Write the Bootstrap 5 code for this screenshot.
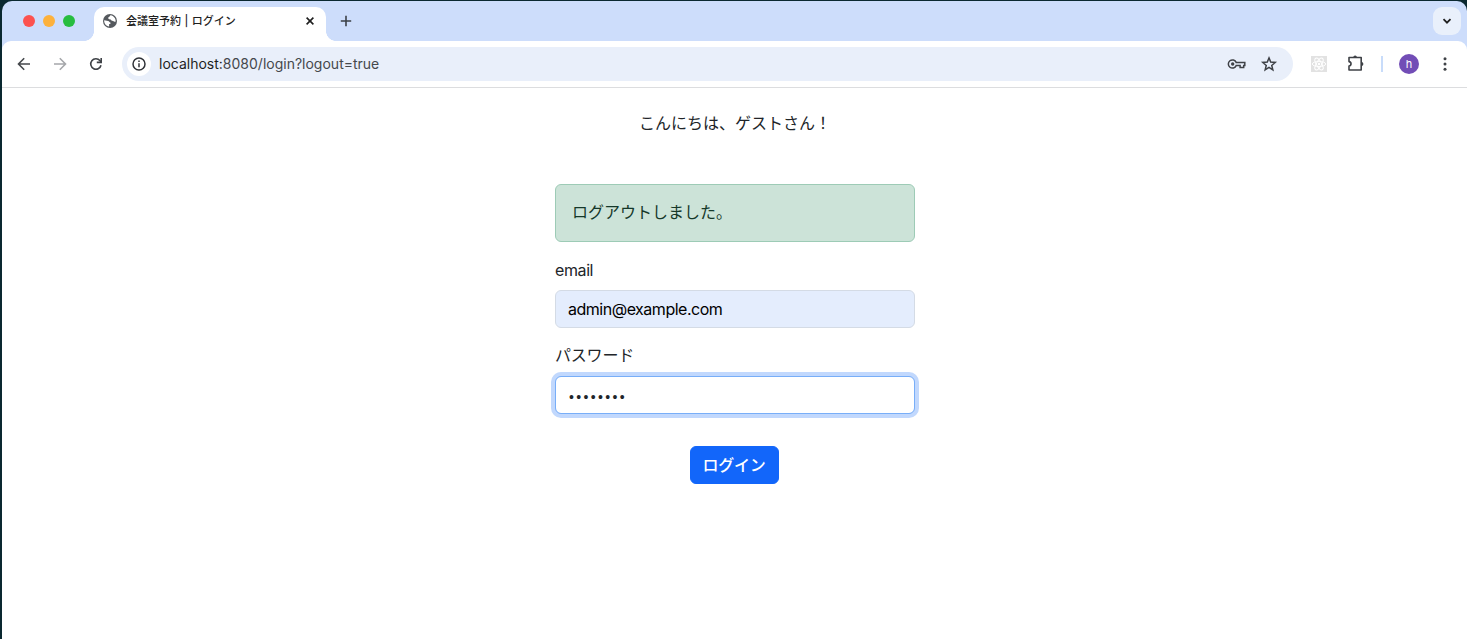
<!DOCTYPE html>
<html lang="ja">
<head>
<meta charset="utf-8">
<title>会議室予約 | ログイン</title>
<link href="https://cdn.jsdelivr.net/npm/bootstrap@5.3.0/dist/css/bootstrap.min.css" rel="stylesheet">
<style>
body{font-family:Inter,"Noto Sans CJK JP",sans-serif;background:#0a2830;height:639px;overflow:hidden;padding:1px 0 0 2px}
svg{display:block;flex:none;overflow:visible}
.win{background:#cdddfb;border-radius:10px 10px 0 0;height:638px;overflow:hidden}
.tabstrip{height:40px;padding:6px 6px 0 21px}
.dots{gap:8px;margin-top:8px}
.dots span{width:12px;height:12px;border-radius:50%}
.tab{width:232px;height:34px;background:#fff;border-radius:10px 10px 0 0;margin-left:19px;padding:0 10px 6px 8px;position:relative}
.tab::before,.tab::after{content:"";position:absolute;bottom:0;width:10px;height:10px}
.tab::before{left:-10px;background:radial-gradient(circle at 0 0,transparent 9.6px,#fff 10.2px)}
.tab::after{right:-10px;background:radial-gradient(circle at 100% 0,transparent 9.6px,#fff 10.2px)}
.tab-title{font-size:11px;line-height:16px;margin-left:8px;color:#1f1f1f;font-weight:500;white-space:nowrap;word-spacing:.5px}
.chev{width:28px;height:28px;border-radius:9px;background:#e9f0fb}
.toolbar{height:47px;background:#fff;border-radius:9px 9px 0 0;border-bottom:1px solid #dcdddf;padding:0 12px 0 12px}
.omni{background:#e9effa;border-radius:17px;height:34px;width:1171px;margin-left:16px;padding:0 14px 0 5px}
.info{width:24px;height:24px;border-radius:50%;background:#fff}
.url{font-size:14px;margin-left:8px;color:#45484c;line-height:20px}
.url b{font-weight:400;color:#1f1f1f}
.sep{width:2px;height:16px;background:#c8dcfa}
.avatar{width:20px;height:20px;border-radius:50%;background:#724db6;color:#fff;font-size:11px}
.page{background:#fff;height:551px;padding-top:23px}
.login{width:360px;margin-left:553px}
.greet{margin-bottom:49px}
.alert-success{background:#cce3d8;border-color:#9dcbb6;color:#15382a;height:58px;padding-top:15px}
.form-label{color:#212529;letter-spacing:-.4px}
.form-label-ja{margin-top:-1px;margin-bottom:9px;letter-spacing:-.2px}
.filled,.filled:focus{background:#e4edfd;color:#000;border-color:#d4dbe5;letter-spacing:-.49px}
.active-field{border-color:#78aef8;box-shadow:0 0 0 .25rem #c1d8fd;font-family:"Liberation Sans",sans-serif;font-size:14px;line-height:24px;height:38px;padding:8px 12px 4px 13px;letter-spacing:2.35px}
.btn-primary{background:#1266fa;border-color:#1266fa;width:89px;height:38px;padding-left:0;padding-right:0;margin:32px 2px 0 0;font-weight:500;letter-spacing:-.3px}
</style>
</head>
<body>
<div class="win">
  <div class="tabstrip d-flex align-items-start">
    <div class="dots d-flex"><span style="background:#fc524f"></span><span style="background:#fdb13c"></span><span style="background:#27bd3f"></span></div>
    <div class="tab d-flex align-items-center">
      <svg width="16" height="16" viewBox="0 0 16 16"><circle cx="8" cy="8" r="7" fill="#55595e"/><path d="M2.200 7.300 6.100 8c1.200.2 1.100 1.400 2.300 1.500v1.600H7.100v2.500c-3-.4-5.200-3.100-4.900-6.300zM8.700 2.200c-.9.300-.7 1.300-1.500 1.600C6 4.300 6 5.400 6.700 6c.8.600 2 .1 2.300 1 .4 1 2 .6 2.600 1.200.5.600 1.100.6 2.100.2.100-2.900-1.900-5.700-5-6.200z" fill="#fff"/></svg>
      <span class="tab-title">会議室予約 | ログイン</span>
      <svg class="ms-auto" width="12" height="12" viewBox="0 0 12 12"><path d="m2.600 2.600 6.800 6.800m0-6.800-6.800 6.800" stroke="#1f1f1f" stroke-width="1.600"/></svg>
    </div>
    <svg style="margin:8px 0 0 14px" width="12" height="12" viewBox="0 0 12 12"><path d="M6 .8v10.400M.8 6h10.400" stroke="#3b4047" stroke-width="1.600"/></svg>
    <div class="chev ms-auto d-flex align-items-center justify-content-center"><svg width="10" height="8" viewBox="0 0 10 8"><path d="m1.500 2.200 3.500 3.500 3.500-3.500" fill="none" stroke="#1f1f1f" stroke-width="1.800"/></svg></div>
  </div>
  <div class="toolbar d-flex align-items-center">
    <svg width="20" height="20" viewBox="0 0 20 20"><path d="M16 10H4.800M10.200 4.300 4.500 10l5.700 5.700" fill="none" stroke="#45484c" stroke-width="1.600"/></svg>
    <svg style="margin-left:16px" width="20" height="20" viewBox="0 0 20 20"><path d="M4 10h11.200M9.800 4.300l5.700 5.700-5.700 5.700" fill="none" stroke="#a5a7aa" stroke-width="1.600"/></svg>
    <svg style="margin-left:16px" width="20" height="20" viewBox="0 0 20 20"><path d="M15 11.200A5.200 5.200 0 1 1 13.900 6.600L15 7.900" fill="none" stroke="#3f4247" stroke-width="1.600"/><path d="M15.200 4v4.400h-4.400" fill="none" stroke="#3f4247" stroke-width="1.600"/></svg>
    <div class="omni d-flex align-items-center">
      <div class="info d-flex align-items-center justify-content-center"><svg width="14" height="14" viewBox="0 0 14 14"><circle cx="7" cy="7" r="6" fill="none" stroke="#303338" stroke-width="1.500"/><path d="M7 6.300v4M7 3.600v1.500" stroke="#303338" stroke-width="1.500"/></svg></div>
      <span class="url"><b>localhost:</b>8080/login?logout=true</span>
      <svg class="ms-auto" width="20" height="20" viewBox="0 0 20 20"><path d="M9.200 8.400A4.100 4.100 0 1 0 9.200 11.600h3.900v1.800h3.600v-1.800h1.100V8.400z" fill="none" stroke="#3f4247" stroke-width="1.500"/><circle cx="5.700" cy="10" r="1.700" fill="#3f4247"/></svg>
      <svg style="margin-left:12px" width="20" height="20" viewBox="0 0 20 20"><path d="m10 3.900 1.700 4.200 4.500.35-3.450 2.950 1.100 4.400L10 13.450 6.150 15.800l1.100-4.400L3.800 8.450l4.500-.35z" fill="none" stroke="#3f4247" stroke-width="1.500"/></svg>
    </div>
    <svg style="margin-left:18px" width="16" height="16" viewBox="0 0 16 16"><path d="M0 0h16v16H0z" fill="#e2e2e2"/><g fill="none" stroke="#fff" stroke-width="1"><ellipse cx="8" cy="8" rx="6.700" ry="2.600"/><ellipse cx="8" cy="8" rx="6.700" ry="2.600" transform="rotate(60 8 8)"/><ellipse cx="8" cy="8" rx="6.700" ry="2.600" transform="rotate(120 8 8)"/></g><circle cx="8" cy="8" r="1.200" fill="#fff"/></svg>
    <svg style="margin-left:19px" width="20" height="20" viewBox="0 0 20 20"><path d="M3 3.500h12.200v12.500H3v-3.900c2.700-.4 2.700-4.100 0-4.500z" fill="none" stroke="#3f4247" stroke-width="1.600" stroke-linejoin="round"/><path d="M7.300 3.200a1.800 1.800 0 0 1 3.600 0zM15.500 8.100a1.900 1.900 0 0 1 0 3.800z" fill="#3f4247"/></svg>
    <div class="sep" style="margin-left:15px"></div>
    <div class="avatar d-flex align-items-center justify-content-center" style="margin-left:16px">h</div>
    <svg class="ms-auto" width="20" height="20" viewBox="0 0 20 20" fill="#3f4247"><circle cx="10" cy="4.700" r="1.500"/><circle cx="10" cy="10" r="1.500"/><circle cx="10" cy="15.300" r="1.500"/></svg>
  </div>
  <main class="page">
    <form class="login">
      <div class="greet text-center">こんにちは、ゲストさん！</div>
      <div class="alert alert-success mb-3">ログアウトしました。</div>
      <div class="mb-3">
        <label class="form-label" for="mail">email</label>
        <input id="mail" class="form-control filled" value="admin@example.com">
      </div>
      <div>
        <label class="form-label form-label-ja d-block" for="pass">パスワード</label>
        <input id="pass" class="form-control active-field" value="••••••••">
      </div>
      <div class="text-center"><button type="button" class="btn btn-primary">ログイン</button></div>
    </form>
  </main>
</div>
<script src="https://cdn.jsdelivr.net/npm/bootstrap@5.3.0/dist/js/bootstrap.bundle.min.js"></script>
</body>
</html>
